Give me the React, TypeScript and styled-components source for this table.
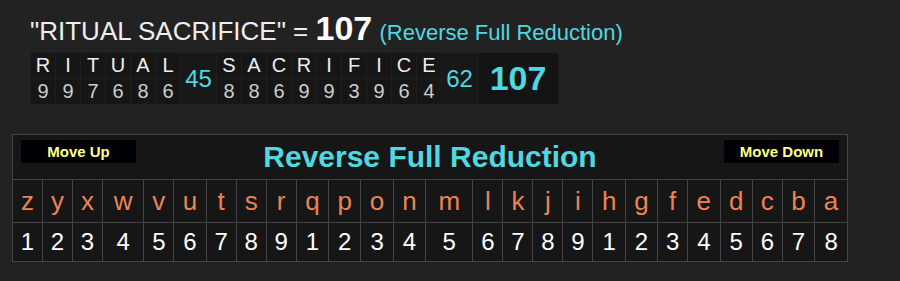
import React from 'react';
import styled, { createGlobalStyle } from 'styled-components';

const GlobalStyle = createGlobalStyle`
  body {
    margin: 0;
    background: #222222;
    font-family: "Liberation Sans", Arial, sans-serif;
  }
`;

const Page = styled.div`
  padding: 13px 0 0 0;
`;

const Heading = styled.div`
  padding-left: 30px;
  font-size: 26px;
  line-height: 30px;
  height: 30px;
  color: #eeeeee;
  white-space: nowrap;
`;

const Total = styled.span`
  font-size: 34px;
  font-weight: bold;
  color: #ffffff;
`;

const CipherNote = styled.span`
  font-size: 22px;
  color: #4fd8e0;
`;

const Breakdown = styled.table`
  margin: 9px 0 0 30px;
  border-collapse: collapse;
  background: #161616;
`;

const Cell = styled.td<{ $num?: boolean }>`
  width: 24px;
  height: 25px;
  padding: 0;
  border: 1px solid #1f1f1f;
  text-align: center;
  font-size: 20px;
  color: ${p => (p.$num ? '#cccccc' : '#eeeeee')};
`;

const WordSum = styled.td`
  width: 35px;
  padding: 0;
  border: 1px solid #1f1f1f;
  background: #181818;
  text-align: center;
  font-size: 24px;
  color: #4fd8e0;
`;

const GrandSum = styled.td`
  width: 80px;
  padding: 0;
  border: 1px solid #1f1f1f;
  background: #141414;
  text-align: center;
  font-size: 34px;
  font-weight: bold;
  color: #4fd8e0;
`;

const Cipher = styled.table`
  margin: 29px 0 0 12px;
  width: 836px;
  border-collapse: collapse;
  background: #161616;
  border: 1px solid #444444;
`;

const HeaderCell = styled.td`
  height: 44px;
  padding: 0 8px;
  border: 1px solid #444444;
  vertical-align: top;
`;

const HeaderBar = styled.div`
  display: grid;
  grid-template-columns: 1fr auto 1fr;
  height: 44px;
`;

const MoveButton = styled.div<{ $right?: boolean }>`
  justify-self: ${p => (p.$right ? 'end' : 'start')};
  margin-top: 5px;
  width: 115px;
  height: 23px;
  background: #000006;
  color: #ffff8c;
  font-size: 15px;
  font-weight: bold;
  line-height: 23px;
  text-align: center;
`;

const CipherTitle = styled.div`
  align-self: center;
  font-size: 30px;
  font-weight: bold;
  color: #4fd8e0;
`;

const LetterCell = styled.td`
  height: 42px;
  padding: 0;
  border: 1px solid #444444;
  text-align: center;
  font-size: 26px;
  color: #ec8452;
`;

const NumberCell = styled.td`
  height: 38px;
  padding: 0;
  border: 1px solid #444444;
  text-align: center;
  font-size: 24px;
  color: #ffffff;
`;

const reduce = (ch: string) => {
  const n = 26 - (ch.charCodeAt(0) - 65);
  return ((n - 1) % 9) + 1;
};

const words = ['RITUAL', 'SACRIFICE'];
const alphabet = 'zyxwvutsrqponmlkjihgfedcba'.split('');

function App() {
  const sums = words.map(w => w.split('').reduce((a, c) => a + reduce(c), 0));
  const total = sums.reduce((a, b) => a + b, 0);

  return (
    <>
      <GlobalStyle />
      <Page>
        <Heading>
          "RITUAL SACRIFICE" = <Total>{total}</Total> <CipherNote>(Reverse Full Reduction)</CipherNote>
        </Heading>

        <Breakdown>
          <tbody>
            <tr>
              {words.map((w, i) => (
                <React.Fragment key={w}>
                  {w.split('').map((c, j) => <Cell key={j}>{c}</Cell>)}
                  <WordSum rowSpan={2}>{sums[i]}</WordSum>
                </React.Fragment>
              ))}
              <GrandSum rowSpan={2}>{total}</GrandSum>
            </tr>
            <tr>
              {words.map(w => w.split('').map((c, j) => <Cell $num key={w + j}>{reduce(c)}</Cell>))}
            </tr>
          </tbody>
        </Breakdown>

        <Cipher>
          <tbody>
            <tr>
              <HeaderCell colSpan={26}>
                <HeaderBar>
                  <MoveButton>Move Up</MoveButton>
                  <CipherTitle>Reverse Full Reduction</CipherTitle>
                  <MoveButton $right>Move Down</MoveButton>
                </HeaderBar>
              </HeaderCell>
            </tr>
            <tr>
              {alphabet.map(l => <LetterCell key={l}>{l}</LetterCell>)}
            </tr>
            <tr>
              {alphabet.map((l, i) => <NumberCell key={l}>{(i % 9) + 1}</NumberCell>)}
            </tr>
          </tbody>
        </Cipher>
      </Page>
    </>
  );
}

export default App;
